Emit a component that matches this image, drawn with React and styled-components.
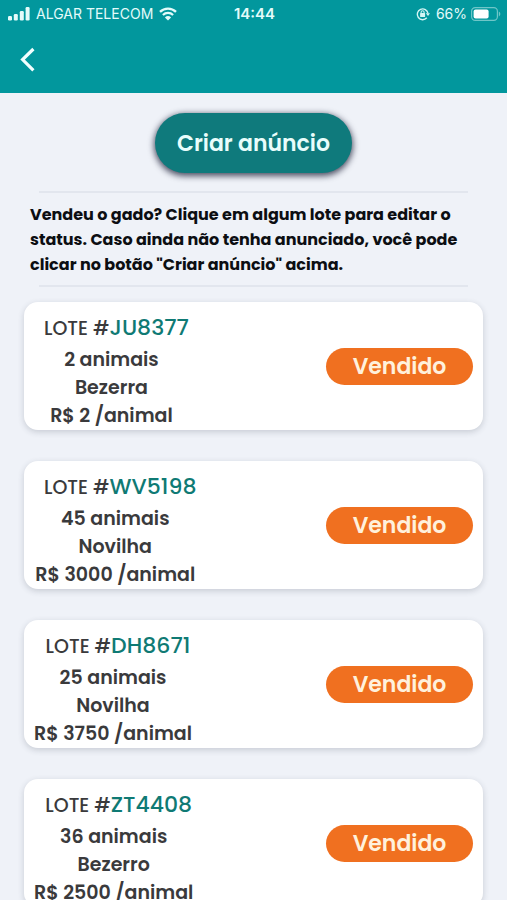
import React from "react"
import styled, { createGlobalStyle } from "styled-components"

const lots = [
  { code: "JU8377", amount: 2, category: "Bezerra", price: 2 },
  { code: "WV5198", amount: 45, category: "Novilha", price: 3000 },
  { code: "DH8671", amount: 25, category: "Novilha", price: 3750 },
  { code: "ZT4408", amount: 36, category: "Bezerro", price: 2500 },
]

const SignalIcon = () => (
  <svg width="22" height="14" viewBox="0 0 22 14" fill="#e4fbfa" aria-hidden="true">
    <rect x="0" y="9" width="4" height="4.5" rx="1.2" />
    <rect x="5.8" y="7" width="4" height="6.5" rx="1.2" />
    <rect x="11.8" y="4" width="4" height="9.5" rx="1.2" />
    <rect x="17.6" y="0" width="4" height="13.5" rx="1.2" />
  </svg>
)

const WifiIcon = () => (
  <svg width="18" height="14" viewBox="0 0 18 14" fill="none" stroke="#e4fbfa" aria-hidden="true">
    <path d="M1 4.8a11.6 11.6 0 0 1 16 0" strokeWidth="2.4" />
    <path d="M3.9 8a7.4 7.4 0 0 1 10.2 0" strokeWidth="2.2" />
    <path d="M9 13.6 5.9 10.4a4.5 4.5 0 0 1 6.2 0z" fill="#e4fbfa" stroke="none" />
  </svg>
)

const RotationLockIcon = () => (
  <svg width="14" height="14" viewBox="0 0 14 14" fill="none" stroke="#d4f5f4" aria-hidden="true">
    <path d="M10.8 10.8A5.4 5.4 0 1 1 12 6.4" strokeWidth="1.4" />
    <path d="M9.8 6.2H14L12 9z" fill="#d4f5f4" stroke="none" />
    <path d="M5.1 6.5V5.3a1.5 1.5 0 0 1 3 0v1.2" strokeWidth="1.1" />
    <rect x="4.1" y="6.1" width="5" height="4" rx="0.6" fill="#d4f5f4" stroke="none" />
  </svg>
)

const BatteryIcon = () => (
  <svg width="30" height="14" viewBox="0 0 30 14" aria-hidden="true">
    <rect x="0.6" y="0.6" width="25.8" height="12.8" rx="3.6" fill="none" stroke="#6fc6c8" strokeWidth="1.2" />
    <rect x="2.6" y="2.4" width="15" height="9.2" rx="2" fill="#ffffff" />
    <path d="M27.8 4.6c2 .8 2 4 0 4.8z" fill="#6fc6c8" />
  </svg>
)

const BackIcon = () => (
  <svg width="16" height="26" viewBox="0 0 16 26" fill="none" aria-hidden="true">
    <path d="M13.4 2 2.6 12.6l10.8 10.8" stroke="#f2ffff" strokeWidth="3.2" />
  </svg>
)

const LotCard = ({ lot }) => (
  <Card>
    <LotInfo>
      <LotTitle>
        LOTE #<LotCode>{lot.code}</LotCode>
      </LotTitle>
      <LotText>{lot.amount} animais</LotText>
      <LotText>{lot.category}</LotText>
      <LotText>R$ {lot.price} /animal</LotText>
    </LotInfo>
    <StatusButton type="button">Vendido</StatusButton>
  </Card>
)

const App = () => {
  return (
    <>
      <GlobalStyle />
      <Header>
        <StatusBar>
          <Carrier>
            <SignalIcon />
            <span>ALGAR TELECOM</span>
            <WifiIcon />
          </Carrier>
          <Time>14:44</Time>
          <Battery>
            <RotationLockIcon />
            <BatteryLevel>66%</BatteryLevel>
            <BatteryIcon />
          </Battery>
        </StatusBar>
        <NavBar>
          <BackButton type="button" aria-label="Voltar">
            <BackIcon />
          </BackButton>
        </NavBar>
      </Header>
      <Main>
        <CreateButton type="button">Criar anúncio</CreateButton>
        <Divider />
        <HelpText>
          Vendeu o gado? Clique em algum lote para editar o status. Caso ainda
          não tenha anunciado, você pode clicar no botão "Criar anúncio" acima.
        </HelpText>
        <Divider />
        <LotList>
          {lots.map((lot) => (
            <LotCard key={lot.code} lot={lot} />
          ))}
        </LotList>
      </Main>
    </>
  )
}

const GlobalStyle = createGlobalStyle`
  * {
    box-sizing: border-box;
  }

  body {
    margin: 0;
    background: #eff2f8;
    font-family: Poppins, Inter, sans-serif;
  }

  button {
    font-family: inherit;
    border: none;
    cursor: pointer;
  }
`

const Header = styled.header`
  background: #02979d;
  color: #e4fbfa;
  font-family: Inter, sans-serif;
`

const StatusBar = styled.div`
  display: grid;
  grid-template-columns: 1fr auto 1fr;
  align-items: center;
  height: 27px;
  padding: 0 6px 0 8px;
  font-size: 14px;
  line-height: 20px;
`

const Carrier = styled.div`
  display: flex;
  align-items: center;
  gap: 6px;
  white-space: nowrap;
`

const Time = styled.div`
  font-size: 15px;
  font-weight: 600;
`

const Battery = styled.div`
  display: flex;
  align-items: center;
  justify-content: flex-end;
  gap: 4px;
`

const BatteryLevel = styled.span`
  margin-left: 2px;
`

const NavBar = styled.nav`
  display: flex;
  align-items: center;
  height: 66px;
  padding: 0 20px;
`

const BackButton = styled.button`
  display: flex;
  padding: 0;
  background: none;
`

const Main = styled.main`
  display: flex;
  flex-direction: column;
  padding: 20px 24px 32px;
`

const CreateButton = styled.button`
  align-self: center;
  height: 60px;
  margin-bottom: 18px;
  padding: 0 22px;
  border-radius: 30px;
  background: #0f7a7c;
  box-shadow: 0 2px 6px 1px rgba(20, 24, 48, 0.75);
  color: #e9fdfb;
  font-size: 22px;
  font-weight: 600;
`

const Divider = styled.hr`
  align-self: stretch;
  height: 2px;
  margin: 0 15px;
  border: none;
  background: #e2e6ee;
`

const HelpText = styled.p`
  margin: 9px 6px 8px;
  color: #0c0e12;
  font-size: 16px;
  font-weight: 700;
  line-height: 25px;
`

const LotList = styled.ul`
  display: flex;
  flex-direction: column;
  gap: 31px;
  margin: 15px 0 0;
  padding: 0;
  list-style: none;
`

const Card = styled.li`
  display: flex;
  align-items: center;
  justify-content: space-between;
  min-height: 128px;
  padding: 0 10px;
  border-radius: 14px;
  background: #ffffff;
  box-shadow: 0 2px 6px rgba(40, 50, 70, 0.2);
`

const LotInfo = styled.div`
  padding-top: 8px;
  color: #3a3a3c;
  font-size: 19px;
  font-weight: 600;
  text-align: center;
  white-space: nowrap;
`

const LotTitle = styled.h2`
  margin: 0 0 0 10px;
  font-size: 19px;
  font-weight: 500;
  line-height: 34px;
`

const LotCode = styled.span`
  color: #0f7a74;
  font-size: 22px;
`

const LotText = styled.p`
  margin: 0;
  line-height: 28px;
`

const StatusButton = styled.button`
  width: 147px;
  height: 37px;
  padding: 0;
  border-radius: 19px;
  background: #f07020;
  color: #fff1dc;
  font-size: 22px;
  font-weight: 600;
`

export default App
